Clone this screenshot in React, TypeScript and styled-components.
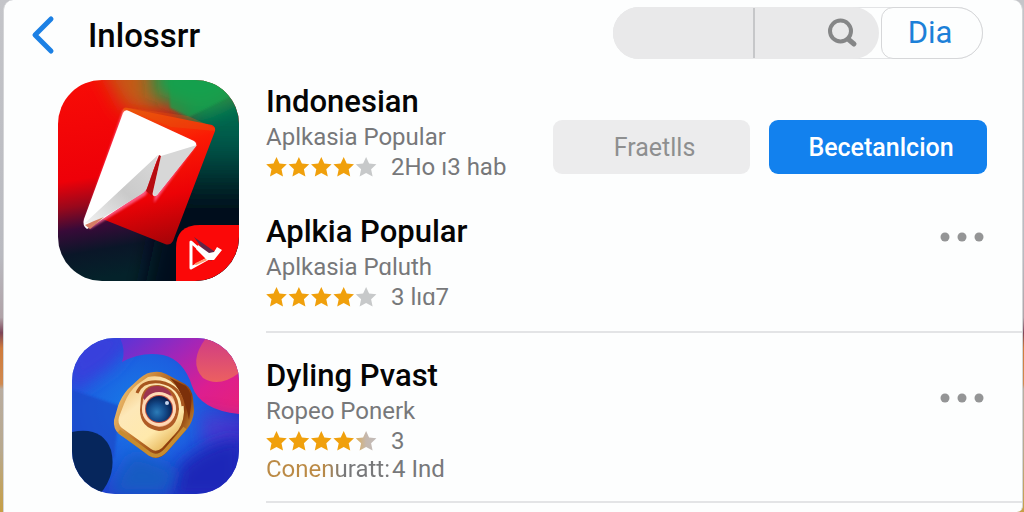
import React from "react";
import styled, { createGlobalStyle } from "styled-components";

const GlobalStyle = createGlobalStyle`
  *, *::before, *::after { box-sizing: border-box; }
  body {
    margin: 0;
    font-family: Roboto, "Liberation Sans", sans-serif;
    color: #050505;
    background: linear-gradient(180deg, #c4c5c9 0%, #b9bac0 50%, #b0a3a8 62%, #7c4558 65%, #cf7b3c 68%, #d08a50 75%, #b9ada0 76%, #b8a98e 88%, #c79f45 100%);
  }
  button, input { font: inherit; }
`;

const Panel = styled.main`
  min-height: 100vh;
  margin: 0 1px 0 3px;
  padding-top: 7px;
  background: #fdfefe;
  border: 1px solid #d4d5d7;
  border-width: 0 1px;
  border-radius: 10px 10px 6px 0;
`;

const Header = styled.header`
  display: flex;
  align-items: center;
  height: 52px;
  padding: 0 39px 0 24px;
`;

const BackButton = styled.button`
  display: flex;
  padding: 3px 0 0;
  border: 0;
  background: none;
  cursor: pointer;
`;

const PageTitle = styled.h1`
  flex: 1;
  margin: 0 0 0 32px;
  padding-top: 6px;
  font-size: 33px;
  line-height: 40px;
  font-weight: 500;
`;

const SearchGroup = styled.form`
  display: flex;
  gap: 3px;
  width: 370px;
  height: 52px;
  border: 1px solid #e3e4e6;
  border-radius: 26px;
`;

const SearchField = styled.div`
  display: flex;
  flex: 1;
  align-items: center;
  min-width: 0;
  margin: -1px 0 -1px -1px;
  border-radius: 26px;
  background: #e9e9ea;
`;

const SearchInput = styled.input`
  width: 142px;
  height: 50px;
  padding: 0 16px 0 24px;
  border: 0;
  border-right: 2px solid #c6c7c9;
  outline: 0;
  background: none;
  font-size: 24px;
`;

const SearchButton = styled.button`
  display: flex;
  margin: 0 20px 0 auto;
  padding: 0;
  border: 0;
  background: none;
  color: #858687;
`;

const CancelButton = styled.button`
  width: 102px;
  margin: -1px;
  padding: 0 4px 0 0;
  border: 1px solid #d6d7d9;
  border-radius: 12px 26px 26px 12px;
  background: #fdfefe;
  color: #1c80d8;
  font-size: 31px;
  line-height: 40px;
`;

const Section = styled.section<{ $gap: number }>`
  display: grid;
  grid-template-columns: 235px minmax(0, 1fr);
  column-gap: 27px;
  padding-top: ${(p) => p.$gap}px;
`;

const Artwork = styled.div`
  justify-self: end;

  svg { display: block; }
`;

const Entries = styled.div<{ $top: number; $bottom: number }>`
  display: flex;
  flex-direction: column;
  gap: 32px;
  padding: ${(p) => p.$top}px 35px ${(p) => p.$bottom}px 0;
  border-bottom: 2px solid #e3e4e6;
`;

const Entry = styled.article`
  display: flex;
  align-items: center;
  justify-content: space-between;
`;

const Name = styled.h2`
  margin: 0;
  font-size: 31px;
  line-height: 38px;
  font-weight: 500;
  white-space: nowrap;
`;

const Subtitle = styled.p`
  margin: 0;
  color: #77787a;
  font-size: 24px;
  line-height: 32px;
  white-space: nowrap;
`;

const Rating = styled.div`
  display: flex;
  align-items: center;
  gap: 14px;
  height: 28px;
  color: #77787a;
  font-size: 24px;
  line-height: 28px;
  white-space: nowrap;
`;

const Stars = styled.svg`
  display: block;
  flex: none;
`;

const Note = styled.p`
  display: flex;
  margin: 0;
  color: #77787a;
  font-size: 24px;
  line-height: 28px;
`;

const NoteLabel = styled.span`
  width: 126px;
  background: linear-gradient(90deg, #bb8a45 0 45%, #77787a 62%);
  background-clip: text;
  color: transparent;
`;

const Actions = styled.div`
  display: flex;
  gap: 19px;
  margin-top: 30px;
`;

const ActionButton = styled.button<{ $primary?: boolean }>`
  width: ${(p) => (p.$primary ? 218 : 197)}px;
  height: 54px;
  padding: 0 0 0 6px;
  border: 0;
  border-radius: 9px;
  background: ${(p) => (p.$primary ? "#1281ee" : "#ececed")};
  color: ${(p) => (p.$primary ? "#ffffff" : "#8e8f90")};
  font-size: 25px;
  font-weight: ${(p) => (p.$primary ? 500 : 400)};
`;

const MoreButton = styled.button<{ $top: number }>`
  display: flex;
  align-self: flex-start;
  margin-top: ${(p) => p.$top}px;
  padding: 0;
  border: 0;
  background: none;
  color: #949596;
`;

const STAR = "M10.500 0 L13.500 6.400 L20.800 7.200 L15.500 12.300 L17 19.600 L10.500 16 L4 19.600 L5.500 12.300 L0.200 7.200 L7.500 6.400 Z";

function StarRow({ blend }: { blend?: boolean }) {
  return (
    <Stars width="111" height="20" viewBox="0 0 111 20" role="img" aria-label="4 / 5">
      <defs>
        <linearGradient id="lastStar">
          <stop offset="0" stopColor="#dcae5c" />
          <stop offset="0.5" stopColor="#c5b8ae" />
          <stop offset="1" stopColor="#c2bcba" />
        </linearGradient>
      </defs>
      {[0, 1, 2, 3, 4].map((i) => (
        <path
          key={i}
          d={STAR}
          transform={`translate(${i * 22.4} 0)`}
          fill={i < 4 ? "#f0a00c" : blend ? "url(#lastStar)" : "#c7c9ca"}
        />
      ))}
    </Stars>
  );
}

function More({ top }: { top: number }) {
  return (
    <MoreButton type="button" aria-label="More" $top={top}>
      <svg width="48" height="10" viewBox="0 0 48 10" fill="currentColor">
        <circle cx="6" cy="5" r="4.5" />
        <circle cx="23" cy="5" r="4.5" />
        <circle cx="40" cy="5" r="4.5" />
      </svg>
    </MoreButton>
  );
}

function PlaneArt() {
  return (
    <svg width="181" height="201" viewBox="0 0 181 201" aria-hidden="true">
      <defs>
        <clipPath id="planeClip"><rect width="181" height="201" rx="44" /></clipPath>
        <linearGradient id="planeBase" x1="0" y1="0" x2="0.15" y2="1">
          <stop offset="0" stopColor="#f80c06" />
          <stop offset="0.5" stopColor="#ee0008" />
          <stop offset="0.63" stopColor="#98081c" />
          <stop offset="0.74" stopColor="#380a38" />
          <stop offset="0.86" stopColor="#0a1628" />
          <stop offset="1" stopColor="#04222a" />
        </linearGradient>
        <linearGradient id="planeDark" gradientUnits="userSpaceOnUse" x1="0" y1="20" x2="0" y2="160">
          <stop offset="0" stopColor="#067050" />
          <stop offset="0.3" stopColor="#04584a" />
          <stop offset="0.75" stopColor="#04101c" />
          <stop offset="1" stopColor="#040a1c" />
        </linearGradient>
        <linearGradient id="planeCard" x1="0.4" y1="0" x2="0.6" y2="1">
          <stop offset="0" stopColor="#ee5208" />
          <stop offset="0.3" stopColor="#fb1a04" />
          <stop offset="0.65" stopColor="#ec0206" />
          <stop offset="1" stopColor="#a40408" />
        </linearGradient>
        <linearGradient id="foldLeft" x1="1" y1="0" x2="0" y2="1">
          <stop offset="0" stopColor="#d9d9d9" />
          <stop offset="0.5" stopColor="#cacaca" />
          <stop offset="1" stopColor="#f1f1f1" />
        </linearGradient>
        <filter id="planeSoft" x="-60%" y="-60%" width="220%" height="220%"><feGaussianBlur stdDeviation="10" /></filter>
        <filter id="planeEdge" x="-20%" y="-20%" width="140%" height="140%"><feGaussianBlur stdDeviation="1" /></filter>
      </defs>
      <g clipPath="url(#planeClip)">
        <rect width="181" height="201" fill="url(#planeBase)" />
        <path d="M130 20 L240 0 V240 H80 L100 145 Z" fill="url(#planeDark)" filter="url(#planeSoft)" />
        <path d="M40 -20 H100 L106 34 L66 30 Z" fill="#c45a14" filter="url(#planeSoft)" />
        <path d="M92 -20 H220 V0 L142 36 L94 18 Z" fill="#16a24e" filter="url(#planeSoft)" />
        <path d="M112 -1 H181 V12 L131 37 L112 28 Z" fill="#18a04e" opacity="0.7" filter="url(#planeEdge)" />
        <path d="M65 29 Q67 27 70 28 L154 45 Q158 47 157 51 L115 161 Q112 166 107 164 L42 138 Z" fill="url(#planeCard)" />
        <path d="M65 27 L130 36 L157 48 L157 51 L113 47 Z" fill="#e05a10" opacity="0.35" />
        <path d="M65 30 L138 63 L137 67 L96 123 L100 78 L88 115 L32 149 L26 142 Z" fill="#ff6a9a" filter="url(#planeEdge)" opacity="0.8" />
        <path d="M26 139 L65 33 Q67 29 71 31 L136 61 Q140 64 137 67 L99 115 Q95 118 94 113 L100 77 L88 108 Q86 113 81 115 L34 146 L29 149 Q24 146 26 139 Z" fill="#fff" />
        <path d="M27 143 L100 75 L90 106 Q88 112 82 115 L38 142 Z" fill="url(#foldLeft)" />
        <path d="M103 76 L139 65 L99 115 Q95 118 95 112 Z" fill="#d7d7d7" />
        <path d="M101 75 L88 111 L94 116 L103 76 Z" fill="#b60c10" />
        <path d="M27 145 L36 141 L46 137 L32 149 Z" fill="#d77e64" />
        <path d="M118 201 V168 Q118 145 142 145 H181 V201 Z" fill="#fb0808" />
        <path d="M136 157 L160 174 L153 181 Z" fill="#632547" />
        <g fill="none" strokeLinejoin="round" strokeLinecap="round">
          <path d="M133 162 V188 L151 178 Z" stroke="#fff" strokeWidth="3" />
          <path d="M138 184 L151 178" stroke="#ff9c70" strokeWidth="2" />
        </g>
        <path d="M140 165 L151 173 L156 172 L159 167 L164 170 L156 180 L149 180 L138 169 Z" fill="#fff" />
      </g>
    </svg>
  );
}

function EyeArt() {
  return (
    <svg width="167" height="156" viewBox="0 0 167 156" aria-hidden="true">
      <defs>
        <clipPath id="eyeClip"><rect width="167" height="156" rx="43" /></clipPath>
        <radialGradient id="eyeBase" cx="0.4" cy="0.45" r="0.68">
          <stop offset="0" stopColor="#167ce8" />
          <stop offset="0.5" stopColor="#1c60e0" />
          <stop offset="1" stopColor="#2430c8" />
        </radialGradient>
        <linearGradient id="eyePink" x1="0" y1="0" x2="1" y2="0.8">
          <stop offset="0" stopColor="#5934d8" />
          <stop offset="0.4" stopColor="#a226b8" />
          <stop offset="0.75" stopColor="#dc1e90" />
          <stop offset="1" stopColor="#e42080" />
        </linearGradient>
        <linearGradient id="eyeOrange" x1="0" y1="0" x2="0" y2="1">
          <stop offset="0" stopColor="#d03c84" />
          <stop offset="1" stopColor="#ec6060" />
        </linearGradient>
        <linearGradient id="goldRim" x1="0" y1="0.2" x2="1" y2="0.7">
          <stop offset="0" stopColor="#f4c878" />
          <stop offset="0.4" stopColor="#c47c30" />
          <stop offset="0.8" stopColor="#8c3c0c" />
          <stop offset="1" stopColor="#d09a3c" />
        </linearGradient>
        <linearGradient id="goldFace" x1="0" y1="0" x2="0.7" y2="1">
          <stop offset="0" stopColor="#efb867" />
          <stop offset="0.4" stopColor="#fde8b8" />
          <stop offset="0.75" stopColor="#ffe9ac" />
          <stop offset="1" stopColor="#e6b658" />
        </linearGradient>
        <radialGradient id="eyeLens" cx="0.42" cy="0.62" r="0.62">
          <stop offset="0" stopColor="#2c7cb8" />
          <stop offset="0.5" stopColor="#144c8c" />
          <stop offset="1" stopColor="#061d4c" />
        </radialGradient>
        <filter id="eyeSoft" x="-60%" y="-60%" width="220%" height="220%"><feGaussianBlur stdDeviation="8" /></filter>
        <filter id="eyeEdge" x="-20%" y="-20%" width="140%" height="140%"><feGaussianBlur stdDeviation="1" /></filter>
      </defs>
      <g clipPath="url(#eyeClip)">
        <rect width="167" height="156" fill="url(#eyeBase)" />
        <path d="M-10 -10 H70 L40 28 L0 55 Z" fill="#3840dc" filter="url(#eyeSoft)" />
        <path d="M0 52 L48 68 L42 120 H0 Z" fill="#1e48c8" opacity="0.7" filter="url(#eyeEdge)" />
        <path d="M48 0 H167 V76 Q128 72 120 48 Q112 22 91 17 Q70 13 50 24 Q54 12 48 0 Z" fill="url(#eyePink)" />
        <path d="M134 0 Q116 24 131 40 Q147 50 167 35 V0 Z" fill="url(#eyeOrange)" />
        <path d="M128 74 Q146 78 175 82 V110 H132 Z" fill="#5c30cc" opacity="0.6" filter="url(#eyeSoft)" />
        <path d="M98 160 L105 132 Q130 104 170 100 V160 Z" fill="#1c26b8" filter="url(#eyeSoft)" />
        <path d="M36 156 L60 115 L105 132 L96 156 Z" fill="#145cc2" filter="url(#eyeSoft)" />
        <path d="M0 94 Q30 88 39 112 Q45 136 28 156 H0 Z" fill="#06265c" />
        <path d="M82 34 Q88 33 94 36 L113 46 Q120 51 121 60 L122 73 Q121 84 115 91 L94 115 Q86 123 78 118 L47 96 Q41 91 42 82 L46 68 Q49 59 56 51 L68 40 Q75 34 82 34 Z" fill="url(#goldRim)" />
        <path d="M76 39 Q92 36 103 47 Q112 56 112 74 Q111 88 103 96 L90 110 Q84 115 79 111 L50 90 Q45 86 47 79 L52 66 Q57 53 66 46 Z" fill="url(#goldFace)" />
        <path d="M98 40 L114 48 Q121 56 119 68 L117 82 Q112 54 98 40 Z" fill="#7c300a" />
        <path d="M65 55 Q70 42 88 44 Q109 48 111 68" fill="none" stroke="#a8561e" strokeWidth="3" />
        <path d="M69 60 Q72 46 87 47 Q106 50 107 71 Q105 92 87 93 Q68 90 68 72 Z" fill="#b05c26" />
        <path d="M71 61 Q74 49 87 50 Q103 53 104 71 Q102 88 87 89 Q71 86 70 72 Z" fill="#f0b48c" />
        <path d="M71 60 Q74 47 86 48 Q97 49 100 58 Q86 52 75 65 Z" fill="#9c3450" />
        <circle cx="87" cy="71" r="17" fill="#ffd9b4" />
        <circle cx="87" cy="71" r="14" fill="#b84a3c" />
        <circle cx="87" cy="71" r="13" fill="url(#eyeLens)" />
        <circle cx="95" cy="65" r="2" fill="#c4d4ee" />
        <path d="M47 93 L78 116 Q86 121 94 112 L113 90" fill="none" stroke="#c68c30" strokeWidth="4" />
      </g>
    </svg>
  );
}

export default function App() {
  return (
    <>
      <GlobalStyle />
      <Panel>
        <Header>
          <BackButton type="button" aria-label="Back">
            <svg width="28" height="40" viewBox="0 0 28 40" fill="none" stroke="#1c80e4" strokeWidth="5" strokeLinecap="round" strokeLinejoin="round">
              <path d="M23 4 L7 20 L23 36" />
            </svg>
          </BackButton>
          <PageTitle>Inlossrr</PageTitle>
          <SearchGroup role="search">
            <SearchField>
              <SearchInput type="text" aria-label="Search" />
              <SearchButton type="button" aria-label="Search">
                <svg width="32" height="32" viewBox="0 0 32 32" fill="none" stroke="currentColor" strokeWidth="4" strokeLinecap="round">
                  <circle cx="13.500" cy="14" r="10.500" />
                  <path d="M21 22 L27 27" strokeWidth="5" />
                </svg>
              </SearchButton>
            </SearchField>
            <CancelButton type="button">Dia</CancelButton>
          </SearchGroup>
        </Header>

        <Section $gap={21}>
          <Artwork><PlaneArt /></Artwork>
          <Entries $top={3} $bottom={20}>
            <Entry>
              <div>
                <Name>Indonesian</Name>
                <Subtitle>Aplkasia Popular</Subtitle>
                <Rating><StarRow /> 2Ho ı3 hab</Rating>
              </div>
              <Actions>
                <ActionButton type="button">Fraetlls</ActionButton>
                <ActionButton type="button" $primary>Becetanlcion</ActionButton>
              </Actions>
            </Entry>
            <Entry>
              <div>
                <Name>Aplkia Popular</Name>
                <Subtitle>Aplkasia Pɑluth</Subtitle>
                <Rating><StarRow /> 3 lıɑ7</Rating>
              </div>
              <More top={19} />
            </Entry>
          </Entries>
        </Section>

        <Section $gap={5}>
          <Artwork><EyeArt /></Artwork>
          <Entries $top={19} $bottom={18}>
            <Entry>
              <div>
                <Name>Dyling Pvast</Name>
                <Subtitle>Ropeo Ponerk</Subtitle>
                <Rating><StarRow blend /> 3</Rating>
                <Note><NoteLabel>Conenuratt:</NoteLabel>4 Ind</Note>
              </div>
              <More top={36} />
            </Entry>
          </Entries>
        </Section>
      </Panel>
    </>
  );
}
